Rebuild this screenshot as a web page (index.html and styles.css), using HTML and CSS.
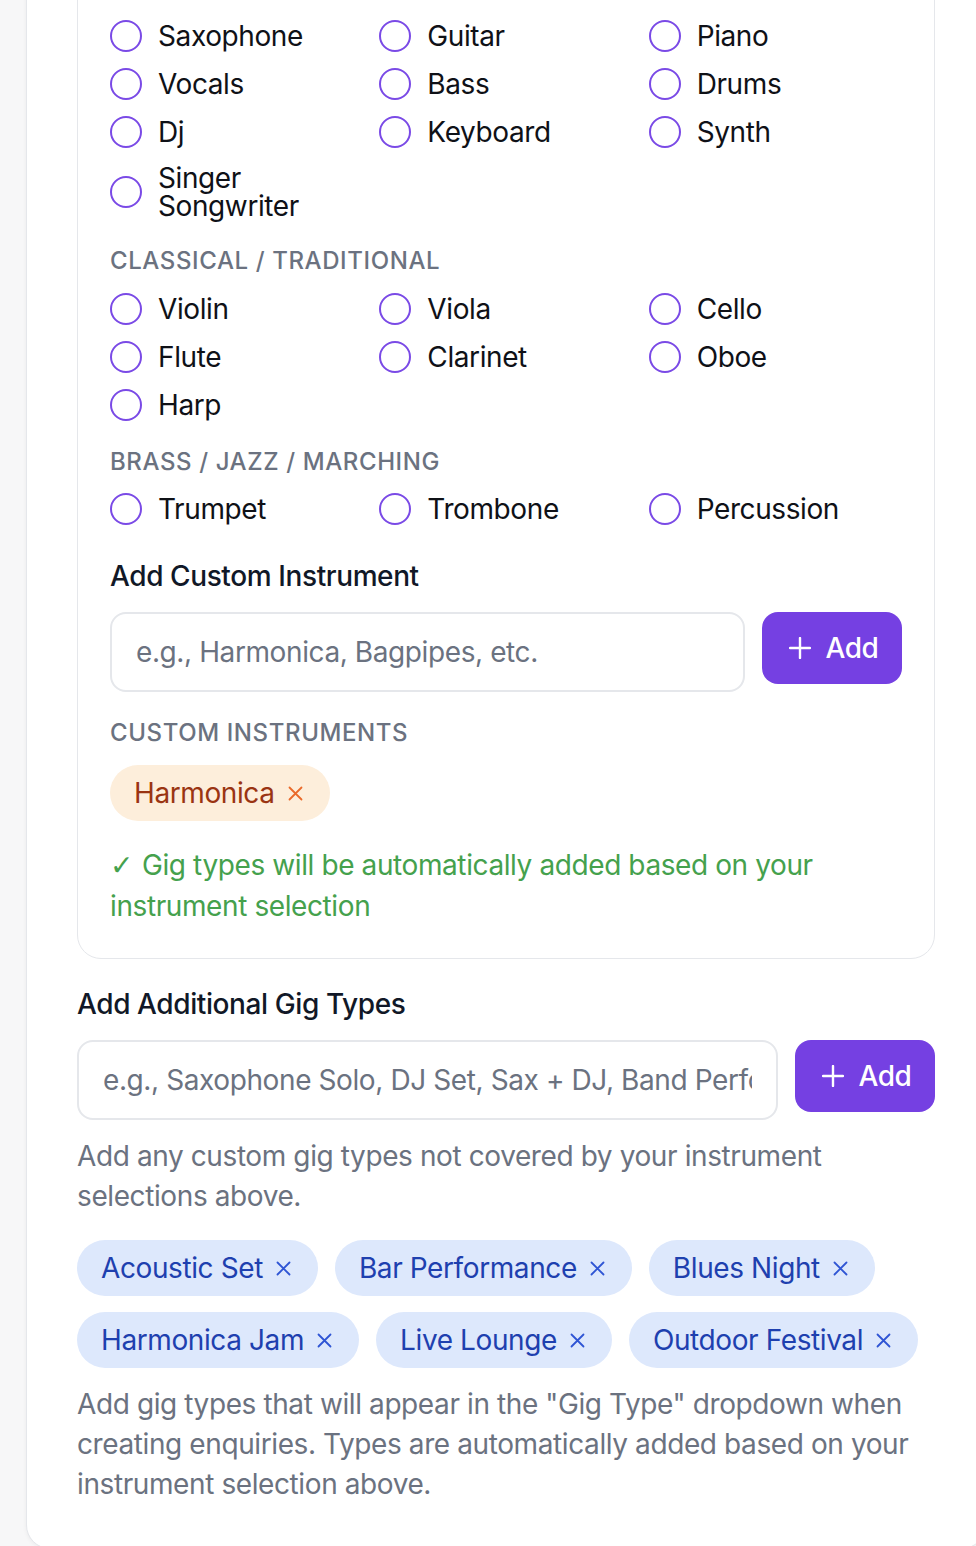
FILE: index.html
```html
<!DOCTYPE html>
<html lang="en">
<head>
<meta charset="utf-8">
<title>Instruments</title>
<link rel="stylesheet" href="styles.css">
</head>
<body>
<div class="page">
  <section class="outer">
    <div class="inner">
      <div class="group-label">POP / ROCK / ELECTRONIC</div>
      <div class="radio-grid">
        <label class="radio"><span class="circle"></span><span class="rtext">Saxophone</span></label>
        <label class="radio"><span class="circle"></span><span class="rtext">Guitar</span></label>
        <label class="radio"><span class="circle"></span><span class="rtext">Piano</span></label>
        <label class="radio"><span class="circle"></span><span class="rtext">Vocals</span></label>
        <label class="radio"><span class="circle"></span><span class="rtext">Bass</span></label>
        <label class="radio"><span class="circle"></span><span class="rtext">Drums</span></label>
        <label class="radio"><span class="circle"></span><span class="rtext">Dj</span></label>
        <label class="radio"><span class="circle"></span><span class="rtext">Keyboard</span></label>
        <label class="radio"><span class="circle"></span><span class="rtext">Synth</span></label>
        <label class="radio"><span class="circle"></span><span class="rtext">Singer Songwriter</span></label>
      </div>

      <div class="group-label spaced">CLASSICAL / TRADITIONAL</div>
      <div class="radio-grid">
        <label class="radio"><span class="circle"></span><span class="rtext">Violin</span></label>
        <label class="radio"><span class="circle"></span><span class="rtext">Viola</span></label>
        <label class="radio"><span class="circle"></span><span class="rtext">Cello</span></label>
        <label class="radio"><span class="circle"></span><span class="rtext">Flute</span></label>
        <label class="radio"><span class="circle"></span><span class="rtext">Clarinet</span></label>
        <label class="radio"><span class="circle"></span><span class="rtext">Oboe</span></label>
        <label class="radio"><span class="circle"></span><span class="rtext">Harp</span></label>
      </div>

      <div class="group-label spaced brass">BRASS / JAZZ / MARCHING</div>
      <div class="radio-grid">
        <label class="radio"><span class="circle"></span><span class="rtext">Trumpet</span></label>
        <label class="radio"><span class="circle"></span><span class="rtext">Trombone</span></label>
        <label class="radio"><span class="circle"></span><span class="rtext">Percussion</span></label>
      </div>

      <h3 class="field-title custom-title">Add Custom Instrument</h3>
      <div class="add-row">
        <input class="text-input" type="text" placeholder="e.g., Harmonica, Bagpipes, etc.">
        <button class="add-btn" type="button">
          <svg class="plus" width="22" height="22" viewBox="0 0 22 22"><path d="M11 1v20M1 11h20" stroke="#fff" stroke-width="2.4" stroke-linecap="round" fill="none"/></svg>
          <span>Add</span>
        </button>
      </div>

      <div class="group-label custom-label">CUSTOM INSTRUMENTS</div>
      <div class="chips">
        <span class="chip chip-orange">Harmonica<svg class="x" width="15" height="15" viewBox="0 0 15 15"><path d="M1.5 1.5l12 12M13.5 1.5l-12 12" stroke="currentColor" stroke-width="1.8" stroke-linecap="round"/></svg></span>
      </div>

      <p class="success"><span class="check">✓</span>Gig types will be automatically added based on your instrument selection</p>
    </div>

    <h3 class="field-title gig-title">Add Additional Gig Types</h3>
    <div class="add-row">
      <input class="text-input" type="text" placeholder="e.g., Saxophone Solo, DJ Set, Sax + DJ, Band Performance">
      <button class="add-btn" type="button">
        <svg class="plus" width="22" height="22" viewBox="0 0 22 22"><path d="M11 1v20M1 11h20" stroke="#fff" stroke-width="2.4" stroke-linecap="round" fill="none"/></svg>
        <span>Add</span>
      </button>
    </div>
    <p class="help">Add any custom gig types not covered by your instrument selections above.</p>

    <div class="chips gig-chips">
      <span class="chip chip-blue">Acoustic Set<svg class="x" width="15" height="15" viewBox="0 0 15 15"><path d="M1.5 1.5l12 12M13.5 1.5l-12 12" stroke="currentColor" stroke-width="1.8" stroke-linecap="round"/></svg></span>
      <span class="chip chip-blue">Bar Performance<svg class="x" width="15" height="15" viewBox="0 0 15 15"><path d="M1.5 1.5l12 12M13.5 1.5l-12 12" stroke="currentColor" stroke-width="1.8" stroke-linecap="round"/></svg></span>
      <span class="chip chip-blue">Blues Night<svg class="x" width="15" height="15" viewBox="0 0 15 15"><path d="M1.5 1.5l12 12M13.5 1.5l-12 12" stroke="currentColor" stroke-width="1.8" stroke-linecap="round"/></svg></span>
      <span class="chip chip-blue">Harmonica Jam<svg class="x" width="15" height="15" viewBox="0 0 15 15"><path d="M1.5 1.5l12 12M13.5 1.5l-12 12" stroke="currentColor" stroke-width="1.8" stroke-linecap="round"/></svg></span>
      <span class="chip chip-blue">Live Lounge<svg class="x" width="15" height="15" viewBox="0 0 15 15"><path d="M1.5 1.5l12 12M13.5 1.5l-12 12" stroke="currentColor" stroke-width="1.8" stroke-linecap="round"/></svg></span>
      <span class="chip chip-blue">Outdoor Festival<svg class="x" width="15" height="15" viewBox="0 0 15 15"><path d="M1.5 1.5l12 12M13.5 1.5l-12 12" stroke="currentColor" stroke-width="1.8" stroke-linecap="round"/></svg></span>
    </div>
    <p class="help last-help">Add gig types that will appear in the "Gig Type" dropdown when creating enquiries. Types are automatically added based on your instrument selection above.</p>
  </section>
</div>
</body>
</html>
```

FILE: styles.css
```css
* { box-sizing: border-box; }

html, body {
  margin: 0;
  padding: 0;
}

body {
  background: #f7f7f8;
  font-family: "Inter", "Liberation Sans", sans-serif;
  color: #111827;
  width: 976px;
  height: 1546px;
  overflow: hidden;
}

.page {
  width: 976px;
  overflow: hidden;
}

.outer {
  margin-top: -112px;
  margin-left: 26px;
  width: 960px;
  background: #fff;
  border: 1px solid #e5e7eb;
  border-radius: 24px;
  box-shadow: 0 1px 4px rgba(0, 0, 0, 0.05);
  padding: 50px 50px 44px 50px;
  letter-spacing: -0.4px;
}

.inner {
  border: 1px solid #e5e7eb;
  border-radius: 24px;
  padding: 32px;
}

.group-label {
  font-size: 24px;
  line-height: 32px;
  font-weight: 500;
  letter-spacing: 0.025em;
  color: #6b7280;
  margin-bottom: 16px;
}

.group-label.spaced { margin-top: 25px; }
.group-label.brass { margin-bottom: 15px; }

.radio-grid {
  display: grid;
  grid-template-columns: repeat(3, 1fr);
  column-gap: 16px;
  row-gap: 16px;
}

.radio {
  display: flex;
  align-items: center;
  gap: 16px;
  min-height: 32px;
}

.circle {
  flex: 0 0 32px;
  width: 32px;
  height: 32px;
  border: 2.5px solid #7a4ae6;
  border-radius: 50%;
}

.rtext {
  font-size: 28px;
  line-height: 28px;
  color: #0f1117;
}

.field-title {
  margin: 0;
  font-size: 28px;
  line-height: 40px;
  font-weight: 500;
  color: #111827;
}

.custom-title { margin-top: 31px; }

.add-row {
  display: flex;
  align-items: flex-start;
  gap: 17px;
  margin-top: 16px;
}

.text-input {
  flex: 1 1 auto;
  min-width: 0;
  height: 80px;
  border: 2px solid #e5e7eb;
  border-radius: 16px;
  padding: 0 24px;
  font-family: "Inter", "Liberation Sans", sans-serif;
  font-size: 28px;
  letter-spacing: -0.4px;
  color: #111827;
  background: #fff;
  outline: none;
}

.text-input::placeholder { color: #6b7280; }

.add-btn {
  flex: 0 0 140px;
  width: 140px;
  height: 72px;
  border: none;
  border-radius: 16px;
  background: #7540e2;
  color: #fff;
  display: flex;
  align-items: center;
  justify-content: center;
  gap: 14px;
  padding: 0 24px 0 28px;
  font-family: "Inter", "Liberation Sans", sans-serif;
  font-size: 28px;
  font-weight: 500;
  letter-spacing: -0.4px;
}

.plus { flex: 0 0 22px; }

.custom-label { margin-top: 25px; }

.chips {
  display: flex;
  flex-wrap: wrap;
  gap: 16px 17px;
}

.chip {
  display: inline-flex;
  align-items: center;
  gap: 13px;
  height: 56px;
  padding: 0 27px 0 24px;
  border-radius: 28px;
  font-size: 28px;
  line-height: 40px;
}

.chip-orange {
  background: #fdeedb;
  color: #9a3412;
}
.chip-orange .x { color: #ea6a2a; }

.chip-blue {
  background: #dde8fc;
  color: #1e40af;
}
.chip-blue .x { color: #2f55d4; }

.success {
  margin: 24px 0 0 0;
  font-size: 28px;
  line-height: 40px;
  color: #45a14d;
}

.check {
  display: inline-block;
  width: 32px;
  font-family: "DejaVu Sans", sans-serif;
  font-size: 28px;
  line-height: 40px;
  letter-spacing: 0;
}

.gig-title { margin-top: 25px; }

.help {
  margin: 16px 0 0 0;
  font-size: 28px;
  line-height: 40px;
  color: #6b7280;
}

.gig-chips { margin-top: 24px; }

.last-help { margin-top: 16px; }
```
